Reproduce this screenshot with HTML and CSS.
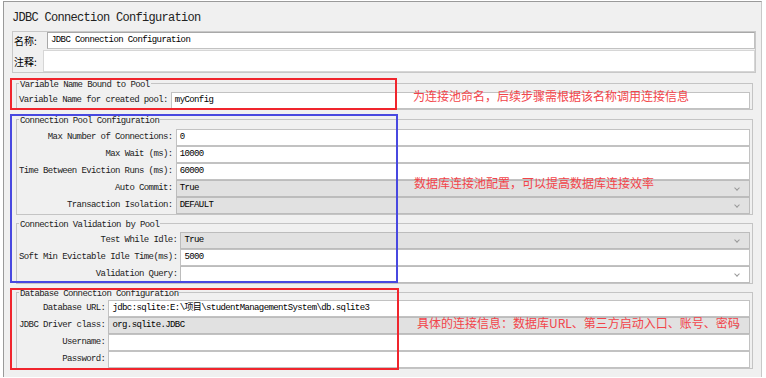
FILE: index.html
```html
<!DOCTYPE html>
<html lang="en">
<head>
<meta charset="UTF-8">
<meta name="viewport" content="width=device-width, initial-scale=1.0">
<title>JDBC Connection Configuration</title>
<link rel="stylesheet" href="styles.css">
</head>
<body>
<div class="window">
    <div class="title">JDBC Connection Configuration</div>

    <div class="namebox">
        <div class="name-row">
            <span class="cn-label">名称:</span>
            <div class="field">JDBC Connection Configuration</div>
        </div>
        <div class="comment-row">
            <span class="cn-label">注释:</span>
            <div class="field area"></div>
        </div>
    </div>

    <div class="groups">
        <fieldset class="group g-var">
            <legend>Variable Name Bound to Pool</legend>
            <label>Variable Name for created pool:</label>
            <div class="field">myConfig</div>
        </fieldset>

        <fieldset class="group g-pool">
            <legend>Connection Pool Configuration</legend>
            <label>Max Number of Connections:</label>
            <div class="field">0</div>
            <label>Max Wait (ms):</label>
            <div class="field">10000</div>
            <label>Time Between Eviction Runs (ms):</label>
            <div class="field">60000</div>
            <label>Auto Commit:</label>
            <div class="field select">True<span class="chev"></span></div>
            <label>Transaction Isolation:</label>
            <div class="field select">DEFAULT<span class="chev"></span></div>
        </fieldset>

        <fieldset class="group g-valid">
            <legend>Connection Validation by Pool</legend>
            <label>Test While Idle:</label>
            <div class="field select">True<span class="chev"></span></div>
            <label>Soft Min Evictable Idle Time(ms):</label>
            <div class="field">5000</div>
            <label>Validation Query:</label>
            <div class="field select white"><span></span><span class="chev"></span></div>
        </fieldset>

        <fieldset class="group g-db">
            <legend>Database Connection Configuration</legend>
            <label>Database URL:</label>
            <div class="field">jdbc:sqlite:E:\项目\studentManagementSystem\db.sqlite3</div>
            <label>JDBC Driver class:</label>
            <div class="field select">org.sqlite.JDBC<span class="chev"></span></div>
            <label>Username:</label>
            <div class="field"></div>
            <label>Password:</label>
            <div class="field"></div>
        </fieldset>
    </div>

    <!-- annotations drawn over the form -->
    <div class="mark red mark-var"></div>
    <div class="mark blue mark-pool"></div>
    <div class="mark red mark-db"></div>
    <div class="note note-var">为连接池命名，后续步骤需根据该名称调用连接信息</div>
    <div class="note note-pool">数据库连接池配置，可以提高数据库连接效率</div>
    <div class="note note-db">具体的连接信息：数据库URL、第三方启动入口、账号、密码</div>
</div>
</body>
</html>
```

FILE: styles.css
```css
body {
    margin: 0;
    padding: 0;
    background-color: #fff;
    font-family: "Liberation Mono", "Noto Sans CJK SC", monospace;
    color: #000;
}
.window {
    position: relative;
    margin: 1px 0 0 3px;
    width: 759px;
    height: 376px;
    background-color: #f0f0f0;
    border-left: 1px solid #9a9a9a;
    border-top: 1px solid #9a9a9a;
    border-right: 1px solid #c8c8c8;
    box-sizing: border-box;
}
.title {
    margin: 8px 0 0 8px;
    height: 16px;
    line-height: 16px;
    font-size: 12px;
    letter-spacing: -0.7px;
    color: #222;
}
.namebox {
    margin: 5px 0 0 8px;
    width: 744px;
    border: 1px solid #c8c8c8;
    box-sizing: border-box;
    padding-left: 1px;
}
.name-row, .comment-row {
    display: flex;
    align-items: center;
}
.name-row {
    height: 17px;
}
.comment-row {
    height: 22px;
    margin-top: 1px;
}
.cn-label {
    font-size: 10px;
    font-family: "Noto Sans CJK SC", sans-serif;
    width: 33px;
    flex: none;
}
.comment-row .cn-label {
    width: 29px;
}
.field {
    flex: 1;
    height: 17px;
    line-height: 15px;
    padding: 0 3px;
    background-color: #fff;
    border: 1px solid #c2c2c2;
    box-sizing: border-box;
    font-size: 9px;
    letter-spacing: -0.6px;
    white-space: nowrap;
    overflow: hidden;
    display: flex;
    align-items: center;
}
.field.area {
    height: 22px;
    border-color: #d6d6d6;
}
.name-row .field {
    border-top-color: #a8a8a8;
    border-left-color: #a8a8a8;
}
.groups {
    margin: 3px 0 0 12px;
    width: 737px;
}
.group {
    margin: 0;
    padding: 2px 2px 0 1px;
    border: 1px solid #c4c4c4;
    display: grid;
    grid-auto-rows: 17px;
    grid-template-columns: auto 1fr;
    min-width: 0;
}
.group legend {
    font-size: 9px;
    letter-spacing: -0.6px;
    line-height: 10px;
    padding: 4px 1px 0;
    margin-left: 1px;
    color: #222;
}
.group label {
    font-size: 9px;
    letter-spacing: -0.6px;
    text-align: right;
    padding: 0 3px 0 1px;
    line-height: 17px;
    white-space: nowrap;
    color: #222;
}
.g-pool {
    margin-top: 2px;
    padding-top: 3px;
}
.g-valid {
    margin-top: 1px;
    padding-top: 2px;
}
.g-db {
    margin-top: 1px;
    padding-top: 1px;
}
.field.select {
    background-color: #e1e1e1;
    border-color: #bcbcbc;
    justify-content: space-between;
}
.field.select.white {
    background-color: #fff;
}
.chev {
    width: 3px;
    height: 3px;
    margin: 0 7px 2px 0;
    border-right: 1px solid #999;
    border-bottom: 1px solid #999;
    transform: rotate(45deg);
    flex: none;
}
.mark {
    position: absolute;
    border: 2px solid;
    box-sizing: border-box;
}
.red {
    border-color: #f0252d;
}
.blue {
    border-color: #4848e0;
}
.mark-var {
    left: 6px;
    top: 76px;
    width: 387px;
    height: 32px;
}
.mark-pool {
    left: 6px;
    top: 112px;
    width: 388px;
    height: 169px;
}
.mark-db {
    left: 6px;
    top: 286px;
    width: 389px;
    height: 82px;
}
.note {
    position: absolute;
    font-family: "Noto Sans CJK SC", sans-serif;
    font-size: 12px;
    line-height: 14px;
    color: #f2444a;
    white-space: nowrap;
}
.note-var {
    left: 409px;
    top: 87px;
}
.note-pool {
    left: 410px;
    top: 174px;
}
.note-db {
    left: 413px;
    top: 314px;
}
```
